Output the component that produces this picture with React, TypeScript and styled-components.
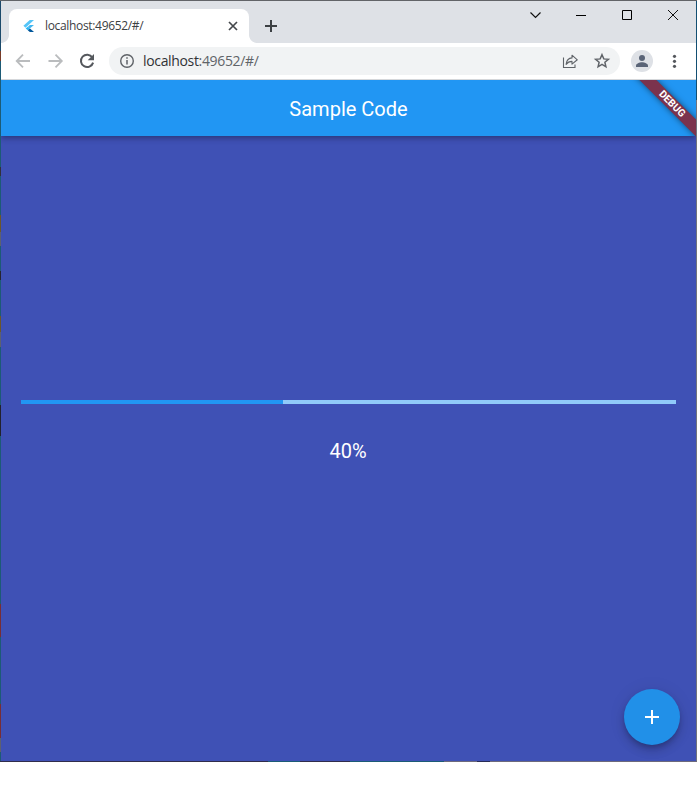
import React from "react";
import styled, { createGlobalStyle } from "styled-components";

const GlobalStyle = createGlobalStyle`
  * { box-sizing: border-box; }
  body { margin: 0; background: #fff; overflow: hidden; }
`;

const BrowserWindow = styled.div`
  width: 697px;
  height: 762px;
  display: flex;
  flex-direction: column;
  padding: 1px;
  font-family: "Open Sans", "Noto Sans", sans-serif;
  background:
    linear-gradient(#626468, #626468) top / 100% 1px no-repeat,
    linear-gradient(90deg, #302d4b 0 268px, #1c5b76 268px 300px, #302d4b 300px 350px, #1c5b76 350px 444px, #6d6a7c 444px 477px, #282c55 477px 490px, #6d6a7c 490px) bottom / 100% 1px no-repeat,
    linear-gradient(#124f73 0 100px, #70737c 100px) right / 1px 100% no-repeat,
    linear-gradient(#1c4a6b 0 51px, #783b28 51px 61px, #1c5b76 61px 167px, #33303b 167px 176px, #1c5b76 176px 215px, #6b562b 215px 232px, #5d6070 232px 246px, #1c5b76 246px 271px, #262530 271px 280px, #1c5b76 280px 316px, #6b562b 316px 332px, #5d6070 332px 347px, #1c5b76 347px 405px, #22222d 405px 436px, #1c5b76 436px 604px, #782d35 604px 637px, #1c5b76 637px 704px, #782d35 704px 738px, #5d6070 738px 752px, #1c5b76 752px) left / 1px 100% no-repeat;
`;

const TabStrip = styled.header`
  height: 42px;
  flex: none;
  display: flex;
  align-items: flex-end;
  padding-left: 8px;
  background: #dee1e6;
`;

const Tab = styled.div`
  position: relative;
  width: 240px;
  height: 34px;
  display: flex;
  align-items: center;
  padding: 0 9px 0 12px;
  border-radius: 8px 8px 0 0;
  background: #fff;
  &::before, &::after {
    content: "";
    position: absolute;
    bottom: 0;
    width: 8px;
    height: 8px;
  }
  &::before {
    left: -8px;
    background: radial-gradient(circle at 0 0, transparent 7.5px, #fff 8.3px);
  }
  &::after {
    right: -8px;
    background: radial-gradient(circle at 100% 0, transparent 7.5px, #fff 8.3px);
  }
`;

const TabTitle = styled.span`
  flex: 1;
  margin-left: 8px;
  font-size: 12px;
  line-height: 18px;
  letter-spacing: -0.33px;
  color: #3c4043;
  white-space: nowrap;
`;

const NewTab = styled.div`
  display: flex;
  margin: 0 0 11px 16px;
`;

const WindowControls = styled.div`
  align-self: flex-start;
  display: flex;
  margin-left: auto;
`;

const WindowButton = styled.div`
  width: 46px;
  height: 28px;
  display: grid;
  place-items: center;
`;

const Toolbar = styled.div`
  height: 37px;
  flex: none;
  display: flex;
  align-items: center;
  padding-left: 12px;
  background: #fff;
  border-bottom: 1px solid #d5d7da;
`;

const NavButton = styled.div`
  width: 32px;
  height: 20px;
  display: flex;
  align-items: center;
`;

const AddressBar = styled.div`
  width: 511px;
  height: 28px;
  display: flex;
  align-items: center;
  padding: 0 9px 0 9px;
  border-radius: 14px;
  background: #f1f3f4;
`;

const Url = styled.span`
  flex: 1;
  margin-left: 7px;
  font-size: 14px;
  line-height: 20px;
  letter-spacing: -0.34px;
  color: #5f6368;
  white-space: nowrap;
`;

const Host = styled.span`
  color: #303236;
`;

const BarIcon = styled.div`
  display: flex;
  margin-left: 14px;
`;

const Avatar = styled.div`
  width: 22px;
  height: 22px;
  margin-left: 11px;
  border-radius: 50%;
  background: #dee1e6;
  display: flex;
`;

const MenuSlot = styled.div`
  display: flex;
  margin-left: 11px;
`;

const Page = styled.main`
  position: relative;
  flex: 1;
  min-height: 0;
  display: flex;
  flex-direction: column;
  overflow: hidden;
  font-family: Roboto, sans-serif;
  color: #fff;
  background: #3f51b5;
`;

const AppBar = styled.div`
  position: relative;
  z-index: 1;
  height: 56px;
  flex: none;
  display: flex;
  align-items: center;
  justify-content: center;
  background: #2196f3;
  box-shadow: 0 2px 4px -1px rgba(0,0,0,.2), 0 4px 5px rgba(0,0,0,.1), 0 1px 8px rgba(0,0,0,.08);
`;

const Title = styled.h1`
  margin: 0;
  padding-top: 1px;
  font-size: 20px;
  line-height: 24px;
  font-weight: 450;
`;

const DebugCorner = styled.div`
  position: absolute;
  z-index: 2;
  top: 0;
  right: 0;
  width: 80px;
  height: 56px;
  overflow: hidden;
`;

const DebugRibbon = styled.div`
  position: absolute;
  top: 18px;
  right: -28px;
  width: 104px;
  height: 12px;
  display: flex;
  align-items: center;
  justify-content: center;
  transform: rotate(45deg);
  background: #7b334d;
  box-shadow: 0 0 6px rgba(0,0,0,.5);
  font-size: 10.2px;
  line-height: 12px;
  font-weight: 700;
`;

const Body = styled.section`
  flex: 1;
  display: flex;
  flex-direction: column;
  align-items: center;
  padding: 264px 20px 0;
`;

const Track = styled.div`
  width: 100%;
  height: 4px;
  background: #90caf9;
`;

const Fill = styled.div<{ $percent: number }>`
  width: ${({ $percent }) => $percent}%;
  height: 100%;
  background: #2196f3;
`;

const Percent = styled.p`
  margin: 35px 1px 0 0;
  font-size: 20px;
  line-height: 24px;
`;

const Fab = styled.div`
  position: absolute;
  right: 16px;
  bottom: 16px;
  width: 56px;
  height: 56px;
  display: grid;
  place-items: center;
  border-radius: 50%;
  background: #2190e8;
  box-shadow: 0 3px 5px -1px rgba(0,0,0,.2), 0 6px 10px rgba(0,0,0,.14), 0 1px 18px rgba(0,0,0,.08);
`;

const FlutterLogo = () => (
  <svg width="16" height="16" viewBox="0 0 16 16">
    <path d="M8.8 2H13L4.5 9.7 2.4 7.7z" fill="#54c5f8" />
    <path d="M8.8 7H13L8.8 10.6 6.7 8.9z" fill="#40b6f0" />
    <path d="M6.7 8.8 9 10.7 6.8 12.3 4.7 10.6z" fill="#29b6f6" />
    <path d="M6.8 12.3 9 10.5 13 14H8.8z" fill="#01579b" />
  </svg>
);

const Arrow = ({ forward = false }: { forward?: boolean }) => (
  <svg width="20" height="20" viewBox="0 0 20 20" fill="none" stroke="#babcbe" strokeWidth="1.8">
    {forward
      ? <path d="M3.5 10H16M10.5 3.7 16.8 10 10.5 16.3" />
      : <path d="M17 10H4M10 3.7 3.7 10 10 16.3" />}
  </svg>
);

export default function App() {
  const progress = 40;
  return (
    <>
      <GlobalStyle />
      <BrowserWindow>
        <TabStrip>
          <Tab>
            <FlutterLogo />
            <TabTitle>localhost:49652/#/</TabTitle>
            <svg width="14" height="14" viewBox="0 0 14 14" stroke="#45484c" strokeWidth="1.7">
              <path d="m3 3 8 8M11 3 3 11" />
            </svg>
          </Tab>
          <NewTab>
            <svg width="12" height="12" viewBox="0 0 12 12" stroke="#3c4043" strokeWidth="2">
              <path d="M6 0v12M0 6h12" />
            </svg>
          </NewTab>
          <WindowControls>
            <WindowButton>
              <svg width="11" height="10" viewBox="0 0 11 10" fill="none" stroke="#111" strokeWidth="1.2">
                <path d="m.5 2.5 5 5 5-5" />
              </svg>
            </WindowButton>
            <WindowButton>
              <svg width="10" height="10" viewBox="0 0 10 10" stroke="#000">
                <path d="M0 5.5h10" />
              </svg>
            </WindowButton>
            <WindowButton>
              <svg width="10" height="10" viewBox="0 0 10 10" fill="none" stroke="#000">
                <path d="M.5.5h9v9h-9z" />
              </svg>
            </WindowButton>
            <WindowButton>
              <svg width="10" height="10" viewBox="0 0 10 10" stroke="#111">
                <path d="m0 0 10 10M10 0 0 10" />
              </svg>
            </WindowButton>
          </WindowControls>
        </TabStrip>
        <Toolbar>
          <NavButton><Arrow /></NavButton>
          <NavButton><Arrow forward /></NavButton>
          <NavButton>
            <svg width="20" height="20" viewBox="0 0 20 20">
              <path d="M15.3 6.4A6.2 6.2 0 1 0 16.1 11.6" fill="none" stroke="#55585d" strokeWidth="2" />
              <path d="M17 3v6.3h-6.3z" fill="#55585d" />
            </svg>
          </NavButton>
          <AddressBar>
            <svg width="18" height="18" viewBox="0 0 18 18" fill="none" stroke="#5f6368">
              <circle cx="9" cy="9" r="6.3" strokeWidth="1.4" />
              <path d="M9 8v4.4M9 5.2v1.6" strokeWidth="1.5" />
            </svg>
            <Url><Host>localhost</Host>:49652/#/</Url>
            <BarIcon>
              <svg width="18" height="18" viewBox="0 0 18 18" fill="none" stroke="#5f6368" strokeWidth="1.1">
                <path d="M2.5 5.5v10h11.5V12.5" />
                <path d="M5.1 12.4C5.5 8.4 7.5 6.1 11 5.9V3.2L16.3 7.8 11 12.1V9.4C8.4 9.4 6.7 10.2 5.1 12.4z" strokeLinejoin="round" />
              </svg>
            </BarIcon>
            <BarIcon>
              <svg width="18" height="18" viewBox="0 0 18 18" fill="none" stroke="#5f6368" strokeWidth="1.5">
                <path d="m9 2.7 1.8 4.2 4.6.4-3.5 3 1 4.5L9 12.4l-3.9 2.4 1-4.5-3.5-3 4.6-.4z" />
              </svg>
            </BarIcon>
          </AddressBar>
          <Avatar>
            <svg width="22" height="22" viewBox="0 0 22 22" fill="#5a6477">
              <circle cx="11" cy="8" r="3" />
              <path d="M5 17v-1.5c0-2 3.5-3.3 6-3.3s6 1.3 6 3.3V17z" />
            </svg>
          </Avatar>
          <MenuSlot>
            <svg width="20" height="20" viewBox="0 0 20 20" fill="#55585d">
              <circle cx="10.5" cy="5.3" r="1.6" />
              <circle cx="10.5" cy="10.3" r="1.6" />
              <circle cx="10.5" cy="15.3" r="1.6" />
            </svg>
          </MenuSlot>
        </Toolbar>
        <Page>
          <AppBar><Title>Sample Code</Title></AppBar>
          <DebugCorner><DebugRibbon>DEBUG</DebugRibbon></DebugCorner>
          <Body>
            <Track><Fill $percent={progress} /></Track>
            <Percent>{progress}%</Percent>
          </Body>
          <Fab>
            <svg width="14" height="14" viewBox="0 0 14 14" stroke="#fff" strokeWidth="2">
              <path d="M7 0v14M0 7h14" />
            </svg>
          </Fab>
        </Page>
      </BrowserWindow>
    </>
  );
}
